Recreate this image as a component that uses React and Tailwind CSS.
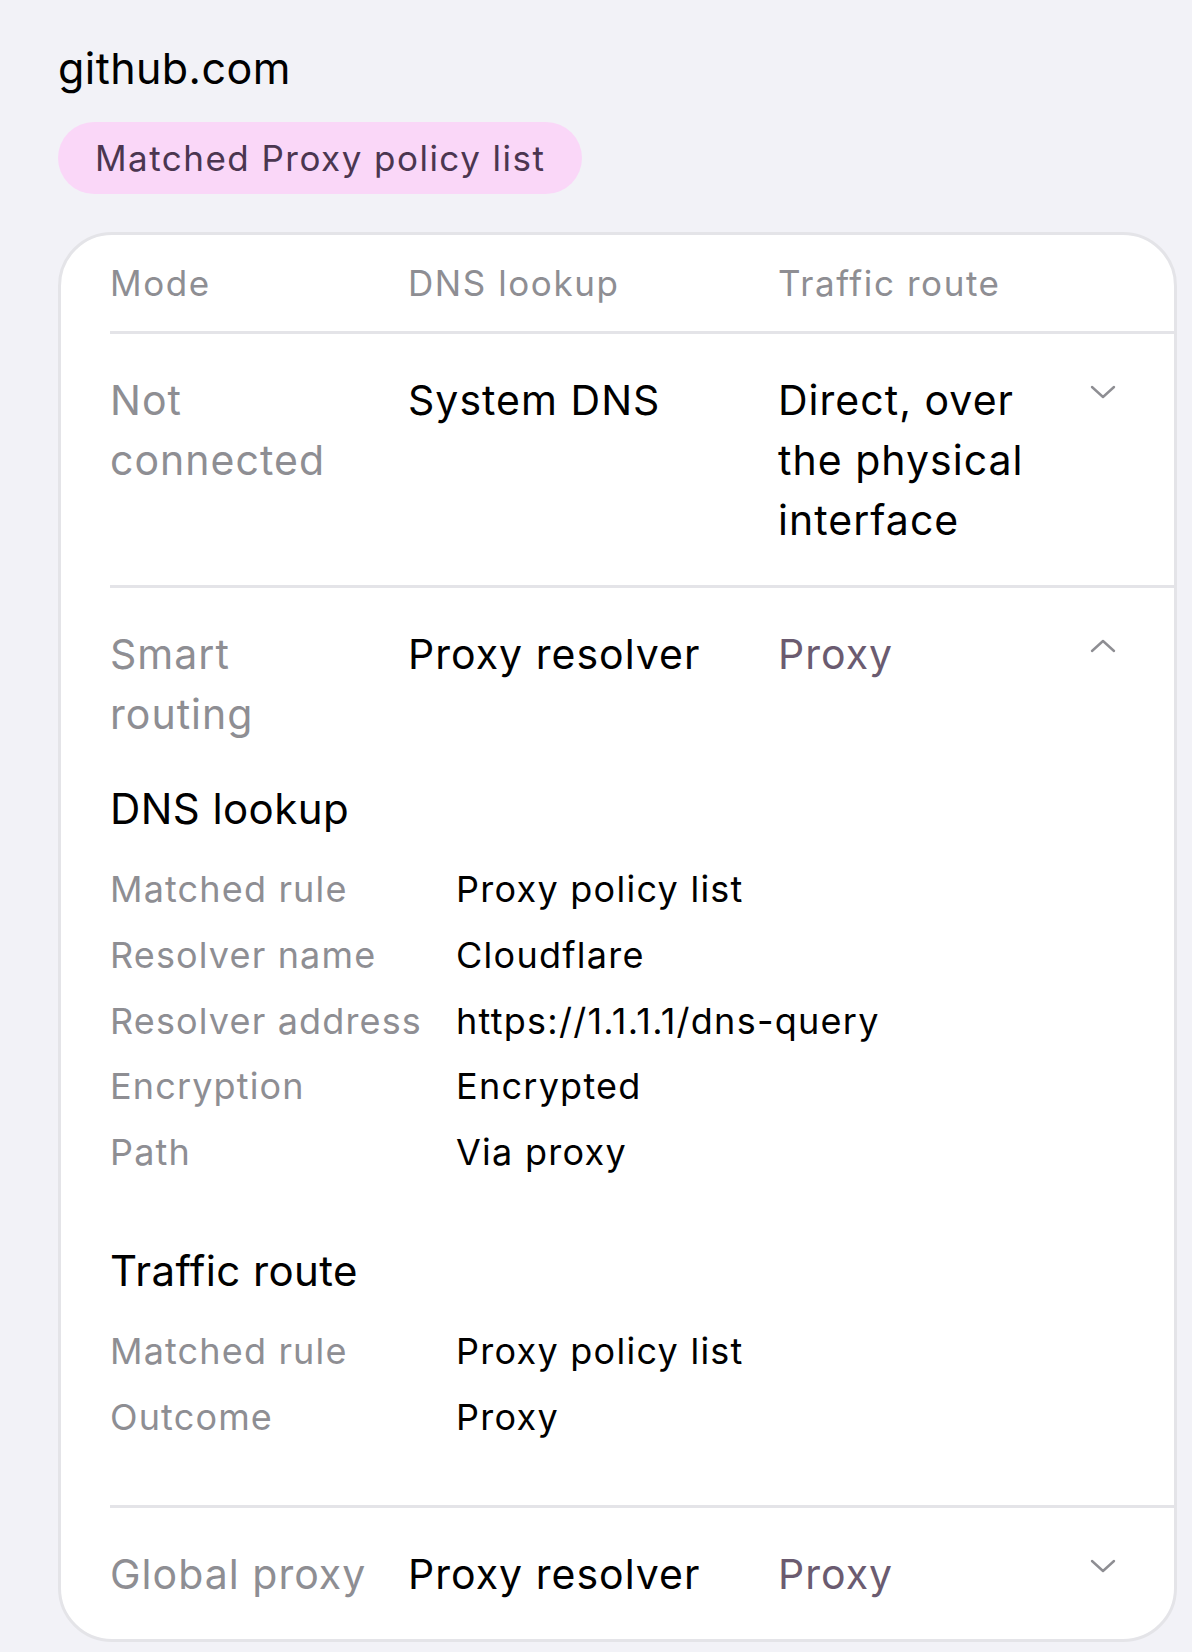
import React from 'react';

const font = { fontFamily: 'Inter, "Noto Sans", sans-serif' };

function Chevron({ up }) {
  return (
    <svg width="26" height="16" viewBox="0 0 26 16" fill="none" className="mt-[-17px]">
      <polyline
        points={up ? '2,13 13,3 24,13' : '2,3 13,13 24,3'}
        stroke="#8e8e93"
        strokeWidth="2.4"
        strokeLinecap="round"
        strokeLinejoin="round"
      />
    </svg>
  );
}

const modes = [
  { mode: 'Not connected', dns: 'System DNS', route: 'Direct, over the physical interface', routeMuted: false, open: false },
  { mode: 'Smart routing', dns: 'Proxy resolver', route: 'Proxy', routeMuted: true, open: true },
  { mode: 'Global proxy', dns: 'Proxy resolver', route: 'Proxy', routeMuted: true, open: false },
];

const dnsDetails = [
  ['Matched rule', 'Proxy policy list'],
  ['Resolver name', 'Cloudflare'],
  ['Resolver address', 'https://1.1.1.1/dns-query'],
  ['Encryption', 'Encrypted'],
  ['Path', 'Via proxy'],
];

const routeDetails = [
  ['Matched rule', 'Proxy policy list'],
  ['Outcome', 'Proxy'],
];

function DetailTable({ title, rows, className }) {
  return (
    <div className={className}>
      <h3 className="text-[42px] leading-[50px] text-black tracking-[0.01em]">{title}</h3>
      <div className="mt-[23px]">
        {rows.map(([label, value]) => (
          <div key={label} className="grid grid-cols-[346px_1fr] text-[36px] leading-[65.75px]">
            <span className="text-[#8e8e93] tracking-[0.032em]">{label}</span>
            <span className="text-black tracking-[0.035em]">{value}</span>
          </div>
        ))}
      </div>
    </div>
  );
}

export default function App() {
  return (
    <div className="min-h-[1652px] bg-[#f2f2f7] pl-[58px] pr-[15px] pt-[43px] pb-[10px]" style={font}>
      <h1 className="text-[43px] leading-[50px] text-black tracking-[0.01em]">github.com</h1>

      <div className="mt-[29px] inline-flex h-[72px] items-center rounded-full bg-[#fad7f8] px-[37px] text-[35px] tracking-[0.042em] text-[#4b3650]">
        Matched Proxy policy list
      </div>

      <div className="mt-[38px] overflow-hidden rounded-[54px] border-[3px] border-[#e4e4e8] bg-white pl-[49px]">
        <div className="grid grid-cols-[298px_370px_1fr] border-b-[3px] border-[#e4e4e8] py-[31px] text-[35px] leading-[34px] tracking-[0.045em] text-[#8e8e93]">
          <span>Mode</span>
          <span>DNS lookup</span>
          <span>Traffic route</span>
        </div>

        {modes.map((m, i) => (
          <div
            key={m.mode}
            className={`pr-[58px] pt-[36px] ${i < modes.length - 1 ? 'border-b-[3px] border-[#e4e4e8]' : ''} ${m.open ? 'pb-[55px]' : 'pb-[35px]'}`}
          >
            <div className="grid grid-cols-[298px_370px_270px_1fr] text-[41px] leading-[60px] tracking-[0.025em]">
              <span className="w-[262px] text-[#8e8e93]">{m.mode}</span>
              <span className="text-black">{m.dns}</span>
              <span className={m.routeMuted ? 'text-[#6b5b70]' : 'text-black'}>{m.route}</span>
              <div className="flex h-[60px] items-center justify-end">
                <Chevron up={m.open} />
              </div>
            </div>

            {m.open && (
              <>
                <DetailTable title="DNS lookup" rows={dnsDetails} className="mt-[40px]" />
                <DetailTable title="Traffic route" rows={routeDetails} className="mt-[60px]" />
              </>
            )}
          </div>
        ))}
      </div>
    </div>
  );
}
